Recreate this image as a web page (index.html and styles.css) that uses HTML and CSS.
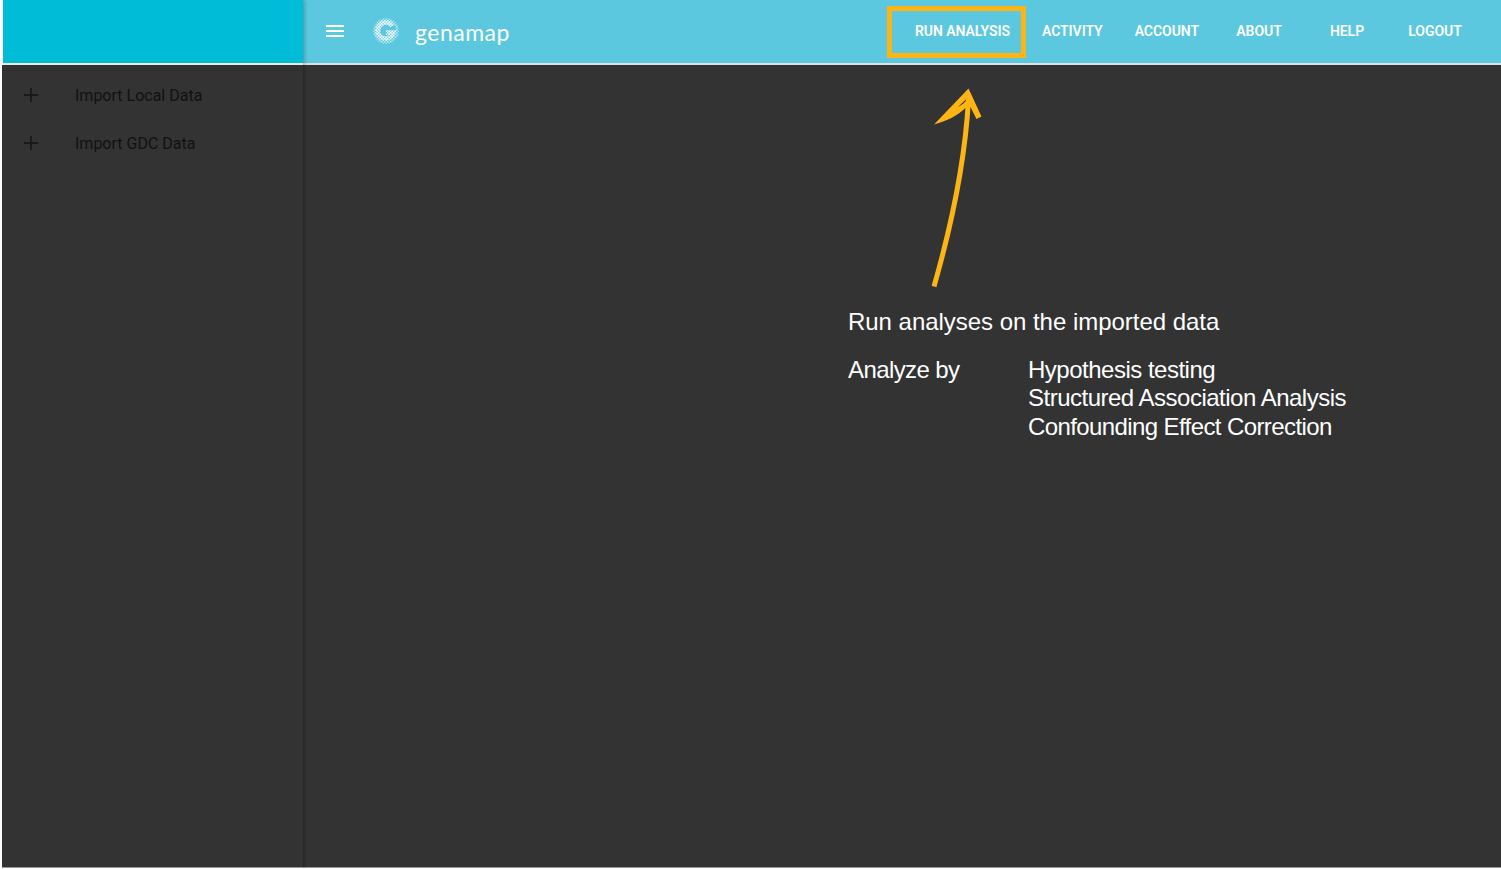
FILE: index.html
```html
<!DOCTYPE html>
<html lang="en">
<head>
<meta charset="utf-8">
<title>genamap</title>
<link rel="stylesheet" href="styles.css">
</head>
<body>
<div class="app">
  <aside class="sidebar">
    <div class="sidebar-head"></div>
    <ul class="menu">
      <li class="menu-item"><svg class="plus" viewBox="0 0 24 24"><path d="M19 13h-6v6h-2v-6H5v-2h6V5h2v6h6z"/></svg><span>Import Local Data</span></li>
      <li class="menu-item"><svg class="plus" viewBox="0 0 24 24"><path d="M19 13h-6v6h-2v-6H5v-2h6V5h2v6h6z"/></svg><span>Import GDC Data</span></li>
    </ul>
  </aside>
  <div class="content">
    <header class="bar">
      <svg class="burger" viewBox="0 0 24 24"><path d="M3 18h18v-2H3v2zm0-5h18v-2H3v2zm0-7v2h18V6H3z"/></svg>
      <svg class="logo" viewBox="0 0 28 28">
        <defs>
          <pattern id="dots" width="3" height="3" patternUnits="userSpaceOnUse">
            <path fill="#fff" d="M0 0h1.500v1.500H0zM1.500 1.500h1.500v1.500H1.500z"/>
          </pattern>
        </defs>
        <circle class="halo" cx="14" cy="14" r="11.500" stroke="url(#dots)"/>
        <path class="soft" d="M20.300 9A8 8 0 1 0 21.500 15.500H15"/>
        <path class="ring" d="M20.300 9A8 8 0 1 0 21.500 15.500H14" stroke="url(#dots)"/>
      </svg>
      <span class="brand">genamap</span>
      <nav class="nav">
        <a class="link active">RUN ANALYSIS</a>
        <a class="link">ACTIVITY</a>
        <a class="link">ACCOUNT</a>
        <a class="link">ABOUT</a>
        <a class="link">HELP</a>
        <a class="link">LOGOUT</a>
      </nav>
    </header>
    <main class="stage">
      <svg class="arrow" viewBox="0 0 80 215">
        <path class="shaft" d="M14 206.500C31 147 45 84 48.500 19"/>
        <path class="head" fill-rule="evenodd" d="M48.500 8.500L61.500 36.500L56.500 39L50.500 27L45.500 28C37 36 27 41 14 44.500zM47.500 18L38 27C42 25 46 22 47.500 18z"/>
      </svg>
      <section class="guide">
        <p class="lead">Run analyses on the imported data</p>
        <div class="methods">
          <p class="by">Analyze by</p>
          <ul class="list">
            <li class="m1">Hypothesis testing</li>
            <li class="m2">Structured Association Analysis</li>
            <li class="m3">Confounding Effect Correction</li>
          </ul>
        </div>
      </section>
    </main>
  </div>
</div>
</body>
</html>
```
FILE: styles.css
```css
*, *::after { box-sizing: border-box; }
body { margin: 0; background: #fff; font-family: Roboto, sans-serif; overflow: hidden; }
p, ul { margin: 0; padding: 0; list-style: none; }
.app { display: flex; height: 868px; padding-left: 2px; }
.sidebar { width: 301px; display: flex; flex-direction: column; position: relative; z-index: 1; box-shadow: 1px 0 4px rgba(0,0,0,.3); clip-path: inset(0 -8px 0 0); }
.sidebar-head { height: 65px; margin-left: 1px; background: #00bcd7; border-bottom: 2px solid #e8eceb; }
.menu { flex: 1; background: linear-gradient(#303332 0 5px, #2e2e2e 5px 6px, #333 6px); border-bottom: 1px solid #999; padding-top: 6px; }
.menu-item { display: flex; align-items: center; height: 48px; padding-left: 17px; font-size: 16px; color: #111; }
.plus { width: 24px; height: 24px; margin-right: 32px; fill: #1b1b1b; }
.content { flex: 1; display: flex; flex-direction: column; }
.bar { height: 65px; background: #5bc8df; border-bottom: 2px solid #dde3e5; display: flex; align-items: center; padding: 0 22px 1px 20px; color: #fff; }
.burger { width: 24px; height: 24px; fill: #fff; }
.logo { width: 28px; height: 28px; margin-left: 25px; }
.halo { fill: none; stroke-width: 2.5; opacity: .6; }
.soft { fill: none; stroke: #fff; stroke-width: 3; opacity: .35; }
.ring { fill: none; stroke-width: 5; }
.brand { margin: 1px 0 0 15px; font: 400 23px/28px Lato, sans-serif; letter-spacing: .5px; }
.nav { margin-left: auto; display: flex; height: 62px; align-items: center; }
.link { position: relative; min-width: 88px; padding: 0 16px; text-align: center; font-size: 14px; font-weight: 600; letter-spacing: -.05px; line-height: 36px; white-space: nowrap; }
.active::after { content: ""; position: absolute; left: -12px; right: 0; top: -7px; height: 52px; border: 5px solid #fdb515; }
.stage { flex: 1; background: #333; border-bottom: 1px solid #999; padding: 15px 0 0 545px; color: #fff; }
.arrow { display: block; width: 80px; height: 215px; margin-left: 72px; }
.shaft { fill: none; stroke: #fdb515; stroke-width: 5; }
.head { fill: #fdb515; }
.guide { padding-top: 13px; font: 24px/28.5px "Liberation Sans", sans-serif; white-space: nowrap; }
.lead { letter-spacing: -.03px; }
.methods { display: flex; margin-top: 19px; }
.by { width: 180px; letter-spacing: -.6px; }
.list { letter-spacing: -.5px; }
.m3 { letter-spacing: -.6px; }
```
